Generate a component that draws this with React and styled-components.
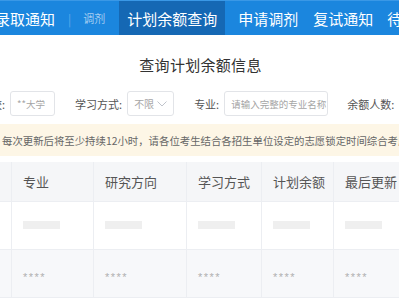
import React from "react";
import styled, { createGlobalStyle } from "styled-components";

const GlobalStyle = createGlobalStyle`
  body {
    margin: 0;
    background: #fff;
    font-family: "Noto Sans CJK SC", "Noto Sans", sans-serif;
    overflow: hidden;
  }
`;

const Page = styled.div`
  width: 399px;
  height: 300px;
  overflow: hidden;
`;

const NavBar = styled.nav`
  height: 35px;
  background: #1b86de;
  border-top: 1px solid #3a98e6;
  box-sizing: border-box;
  display: flex;
  align-items: stretch;
  margin-left: -5px;
  white-space: nowrap;
`;

const NavItem = styled.div`
  display: flex;
  align-items: center;
  padding: 0 ${(p) => (p.$active ? "8px" : p.$bare ? "0" : "7px")};
  margin-right: ${(p) => p.$gap || 0}px;
  font-size: ${(p) => (p.$small ? "11px" : "15px")};
  color: ${(p) => (p.$small ? "#a4cdf1" : "#fff")};
  background: ${(p) => (p.$active ? "#1568b4" : "transparent")};
`;

const Divider = styled.span`
  display: flex;
  align-items: center;
  color: #5fa9ea;
  font-size: 12px;
  margin-right: 5px;
`;

const Title = styled.h1`
  margin: 19px 0 0;
  padding-left: 2px;
  text-align: center;
  font-size: 15px;
  font-weight: normal;
  letter-spacing: 0.3px;
  line-height: 22px;
  color: #333;
`;

const Filters = styled.div`
  display: flex;
  align-items: center;
  margin: 15px 0 0 -20px;
  white-space: nowrap;
`;

const Field = styled.div`
  display: flex;
  align-items: center;
  gap: 5px;
  margin-right: ${(p) => p.$gap || 0}px;
`;

const Label = styled.span`
  font-size: 11px;
  color: #555;
`;

const Box = styled.div`
  width: ${(p) => p.$w}px;
  height: 25px;
  box-sizing: border-box;
  border: 1px solid #e2e4e8;
  border-radius: 3px;
  display: flex;
  align-items: center;
  justify-content: space-between;
  padding: 0 6px;
  font-size: ${(p) => p.$fs || 9.5}px;
  color: #a5a5a5;
  background: #fff;
`;

const Notice = styled.div`
  margin-top: 8px;
  height: 32px;
  background: #fdf6e6;
  display: flex;
  align-items: center;
  padding-left: 2px;
  font-size: 10.4px;
  color: #666;
  white-space: nowrap;
`;

const Table = styled.div`
  margin: 6px 0 0 -30px;
  display: grid;
  grid-template-columns: 42px 82px 93px 75px 72px 80px;
`;

const Cell = styled.div`
  height: ${(p) => (p.$head ? 40 : 48)}px;
  box-sizing: border-box;
  border-right: 1px solid #eceef2;
  border-bottom: 1px solid #eceef2;
  background: ${(p) => (p.$head ? "#f5f6f8" : p.$striped ? "#f7f8fa" : "#fff")};
  display: flex;
  align-items: center;
  padding-left: 11px;
  font-size: 13px;
  color: #555;
  white-space: nowrap;
`;

const Skeleton = styled.div`
  width: 37px;
  height: 8px;
  background: #efefef;
  margin-top: -1px;
`;

const Stars = styled.span`
  font-family: "Liberation Sans", sans-serif;
  font-size: 11px;
  letter-spacing: 1.5px;
  color: #b0b0b0;
  padding-top: 6px;
`;

const Chevron = () => (
  <svg width="10" height="6" viewBox="0 0 10 6">
    <path d="M0.5 0.5 L5 5 L9.5 0.5" fill="none" stroke="#c0c4cc" strokeWidth="1" />
  </svg>
);

const columns = ["", "专业", "研究方向", "学习方式", "计划余额", "最后更新"];

export default function App() {
  return (
    <Page>
      <GlobalStyle />
      <NavBar>
        <NavItem $bare $gap={13}>录取通知</NavItem>
        <Divider>|</Divider>
        <NavItem $small $gap={7}>调剂</NavItem>
        <NavItem $active $gap={6}>计划余额查询</NavItem>
        <NavItem $gap={1}>申请调剂</NavItem>
        <NavItem>复试通知</NavItem>
        <NavItem>待录取通知</NavItem>
      </NavBar>

      <Title>查询计划余额信息</Title>

      <Filters>
        <Field $gap={20}>
          <Label>院校:</Label>
          <Box $w={45}>**大学</Box>
        </Field>
        <Field $gap={20}>
          <Label>学习方式:</Label>
          <Box $w={47} $fs={10}>
            不限
            <Chevron />
          </Box>
        </Field>
        <Field $gap={19}>
          <Label>专业:</Label>
          <Box $w={104}>请输入完整的专业名称</Box>
        </Field>
        <Field>
          <Label>余额人数:</Label>
        </Field>
      </Filters>

      <Notice>每次更新后将至少持续12小时，请各位考生结合各招生单位设定的志愿锁定时间综合考虑</Notice>

      <Table>
        {columns.map((c, i) => (
          <Cell $head key={"h" + i}>{c}</Cell>
        ))}
        {columns.map((c, i) => (
          <Cell key={"a" + i}>{i > 0 && <Skeleton />}</Cell>
        ))}
        {columns.map((c, i) => (
          <Cell $striped key={"b" + i}>{i > 0 && <Stars>****</Stars>}</Cell>
        ))}
      </Table>
    </Page>
  );
}
